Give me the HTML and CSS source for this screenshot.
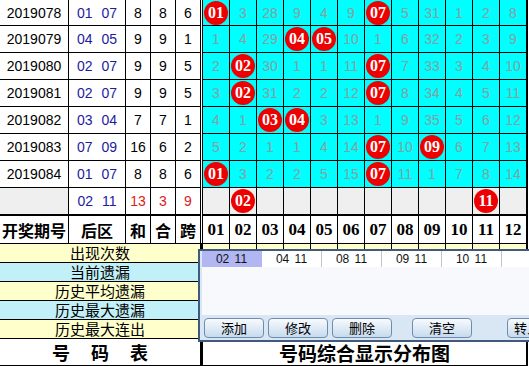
FILE: index.html
```html
<!DOCTYPE html>
<html lang="zh-CN">
<head>
    <meta charset="UTF-8">
    <title>号码表</title>
    <link rel="stylesheet" href="styles.css">
</head>
<body>
<div class="sheet">
    <div class="top">
        <div class="sep"></div>

        <div class="qh">2019078</div><div class="hq">01 07</div><div class="n">8</div><div class="n">8</div><div class="n">6</div>
        <div class="c"><span class="ball">01</span></div><div class="c">3</div><div class="c">28</div><div class="c">9</div><div class="c">4</div><div class="c">9</div><div class="c"><span class="ball">07</span></div><div class="c">5</div><div class="c">31</div><div class="c">1</div><div class="c">2</div><div class="c">8</div>

        <div class="qh">2019079</div><div class="hq">04 05</div><div class="n">9</div><div class="n">9</div><div class="n">1</div>
        <div class="c">1</div><div class="c">4</div><div class="c">29</div><div class="c"><span class="ball">04</span></div><div class="c"><span class="ball">05</span></div><div class="c">10</div><div class="c">1</div><div class="c">6</div><div class="c">32</div><div class="c">2</div><div class="c">3</div><div class="c">9</div>

        <div class="qh">2019080</div><div class="hq">02 07</div><div class="n">9</div><div class="n">9</div><div class="n">5</div>
        <div class="c">2</div><div class="c"><span class="ball">02</span></div><div class="c">30</div><div class="c">1</div><div class="c">1</div><div class="c">11</div><div class="c"><span class="ball">07</span></div><div class="c">7</div><div class="c">33</div><div class="c">3</div><div class="c">4</div><div class="c">10</div>

        <div class="qh">2019081</div><div class="hq">02 07</div><div class="n">9</div><div class="n">9</div><div class="n">5</div>
        <div class="c">3</div><div class="c"><span class="ball">02</span></div><div class="c">31</div><div class="c">2</div><div class="c">2</div><div class="c">12</div><div class="c"><span class="ball">07</span></div><div class="c">8</div><div class="c">34</div><div class="c">4</div><div class="c">5</div><div class="c">11</div>

        <div class="qh">2019082</div><div class="hq">03 04</div><div class="n">7</div><div class="n">7</div><div class="n">1</div>
        <div class="c">4</div><div class="c">1</div><div class="c"><span class="ball">03</span></div><div class="c"><span class="ball">04</span></div><div class="c">3</div><div class="c">13</div><div class="c">1</div><div class="c">9</div><div class="c">35</div><div class="c">5</div><div class="c">6</div><div class="c">12</div>

        <div class="qh">2019083</div><div class="hq">07 09</div><div class="n">16</div><div class="n">6</div><div class="n">2</div>
        <div class="c">5</div><div class="c">2</div><div class="c">1</div><div class="c">1</div><div class="c">4</div><div class="c">14</div><div class="c"><span class="ball">07</span></div><div class="c">10</div><div class="c"><span class="ball">09</span></div><div class="c">6</div><div class="c">7</div><div class="c">13</div>

        <div class="qh">2019084</div><div class="hq">01 07</div><div class="n">8</div><div class="n">8</div><div class="n">6</div>
        <div class="c"><span class="ball">01</span></div><div class="c">3</div><div class="c">2</div><div class="c">2</div><div class="c">5</div><div class="c">15</div><div class="c"><span class="ball">07</span></div><div class="c">11</div><div class="c">1</div><div class="c">7</div><div class="c">8</div><div class="c">14</div>

        <!-- 预测行 -->
        <div class="qh gray"></div><div class="hq">02 11</div><div class="n red">13</div><div class="n red">3</div><div class="n red">9</div>
        <div class="c gray"></div><div class="c gray"><span class="ball">02</span></div><div class="c gray"></div><div class="c gray"></div><div class="c gray"></div><div class="c gray"></div><div class="c gray"></div><div class="c gray"></div><div class="c gray"></div><div class="c gray"></div><div class="c gray"><span class="ball">11</span></div><div class="c gray"></div>

        <div class="hd">开奖期号</div><div class="hd">后区</div><div class="hd">和</div><div class="hd">合</div><div class="hd">跨</div>
        <div class="hd num">01</div><div class="hd num">02</div><div class="hd num">03</div><div class="hd num">04</div><div class="hd num">05</div><div class="hd num">06</div><div class="hd num">07</div><div class="hd num">08</div><div class="hd num">09</div><div class="hd num">10</div><div class="hd num">11</div><div class="hd num">12</div>
    </div>

    <div class="bottom">
        <div class="sep"></div>
        <div class="lab yel">出现次数</div><div class="cells yel"></div>
        <div class="lab blu">当前遗漏</div><div class="cells blu"></div>
        <div class="lab yel">历史平均遗漏</div><div class="cells yel"></div>
        <div class="lab blu">历史最大遗漏</div><div class="cells blu"></div>
        <div class="lab yel">历史最大连出</div><div class="cells yel"></div>
        <div class="foot left"><span>号</span><span>码</span><span>表</span></div>
        <div class="foot right">号码综合显示分布图</div>
    </div>

    <div class="panel">
        <div class="list">
            <div class="tabs">
                <div class="tab on">02 11</div>
                <div class="tab">04 11</div>
                <div class="tab">08 11</div>
                <div class="tab">09 11</div>
                <div class="tab">10 11</div>
                <div class="tab"></div>
            </div>
        </div>
        <div class="btns">
            <div class="btn">添加</div>
            <div class="btn">修改</div>
            <div class="btn">删除</div>
            <div class="btn clear">清空</div>
            <div class="btn move">转入</div>
        </div>
    </div>
</div>
</body>
</html>
```

FILE: styles.css
```css
*{
    margin: 0;
    padding: 0;
    box-sizing: border-box;
}
body{
    width: 529px;
    height: 366px;
    overflow: hidden;
    background: #fff;
    font-family: "Liberation Sans", "Noto Sans CJK SC", sans-serif;
}
.sheet{
    position: relative;
    width: 529px;
    height: 366px;
    overflow: hidden;
}

/* 上半部分：开奖数据 */
.top{
    display: grid;
    grid-template-columns: 68px 56px 24px 24px 24px 1px repeat(12, 26px);
    grid-template-rows: 25px repeat(7, 26px) 28px;
    gap: 1px;
    width: 528px;
    background: #000;
    border-right: 2px solid #000;
}
.sep{
    grid-column: 6;
    grid-row: 1 / -1;
    background: #000;
}
.top > div{
    display: flex;
    align-items: center;
    justify-content: center;
    background: #fff;
    font-size: 14px;
}
.top .hq{
    color: #1c1ca0;
    word-spacing: 5px;
}
.top .red{
    color: #e01818;
}
.top .c{
    background: #00ffff;
    color: #86a0a0;
    font-size: 14px;
}
.top .gray{
    background: #efefef;
}
.ball{
    display: flex;
    align-items: center;
    justify-content: center;
    width: 24px;
    height: 24px;
    border-radius: 50%;
    background: #ee0000;
    color: #fff;
    font-family: "Liberation Serif", serif;
    font-weight: bold;
    font-size: 16px;
}
.top .hd{
    border-top: 1px solid #000;
    font-family: "Noto Sans CJK SC", sans-serif;
    font-weight: bold;
    font-size: 16px;
    color: #000;
}
.top .hd.num{
    font-family: "Liberation Serif", serif;
    font-size: 17px;
}

/* 下半部分：统计 */
.bottom{
    display: grid;
    grid-template-columns: 68px 56px 24px 24px 24px 1px repeat(12, 26px);
    grid-template-rows: repeat(5, 18px) 26px;
    gap: 1px;
    width: 528px;
    padding-top: 1px;
    background: #000;
    border-right: 2px solid #000;
    border-bottom: 2px solid #000;
}
.lab{
    grid-column: 1 / 6;
    display: flex;
    align-items: center;
    justify-content: center;
    font-family: "Noto Sans CJK SC", sans-serif;
    font-size: 15px;
    line-height: 18px;
    color: #000;
}
.cells{
    grid-column: 7 / 19;
}
.yel{
    background: #ffffcc;
}
.blu{
    background: #c2f0f8;
}
.cells.yel{
    background: repeating-linear-gradient(to right, #ffffcc 0 26px, #000 26px 27px);
}
.cells.blu{
    background: repeating-linear-gradient(to right, #c2f0f8 0 26px, #000 26px 27px);
}
.foot{
    display: flex;
    align-items: center;
    justify-content: center;
    background: #fff;
    font-family: "Noto Sans CJK SC", sans-serif;
    font-weight: bold;
}
.foot.left{
    grid-column: 1 / 6;
    gap: 21px;
    font-size: 18px;
}
.foot.right{
    grid-column: 7 / 19;
    font-size: 19px;
}

/* 浮动的号码列表窗口 */
.panel{
    position: absolute;
    left: 198px;
    top: 249px;
    width: 345px;
    height: 93px;
    border: 2px solid #3f5a7a;
    background: #d9e6f3;
    padding: 0 0 0 2px;
    display: flex;
    flex-direction: column;
}
.list{
    height: 64px;
    background: #f7f9fd;
}
.tabs{
    display: flex;
    height: 16px;
    background: #fff;
}
.tab{
    width: 60px;
    flex: none;
    border-right: 1px solid #c4c4c4;
    text-align: center;
    font-size: 12px;
    line-height: 16px;
    color: #111;
    word-spacing: 2px;
}
.tab.on{
    background: #b2b6f2;
    border-right-color: #b2b6f2;
}
.tab:last-child{
    width: 40px;
    border-right: none;
}
.btns{
    display: flex;
    gap: 4px;
    padding: 3px 0 0 2px;
}
.btn{
    width: 60px;
    height: 20px;
    flex: none;
    border: 1px solid #6f8cad;
    border-radius: 4px;
    background: linear-gradient(#f7fafd, #dde9f5 55%, #c6daee);
    text-align: center;
    font-family: "Noto Sans CJK SC", sans-serif;
    font-size: 13px;
    line-height: 18px;
    color: #000;
}
.btn.clear{
    margin-left: 16px;
}
.btn.move{
    width: 40px;
    margin-left: 31px;
}
```
